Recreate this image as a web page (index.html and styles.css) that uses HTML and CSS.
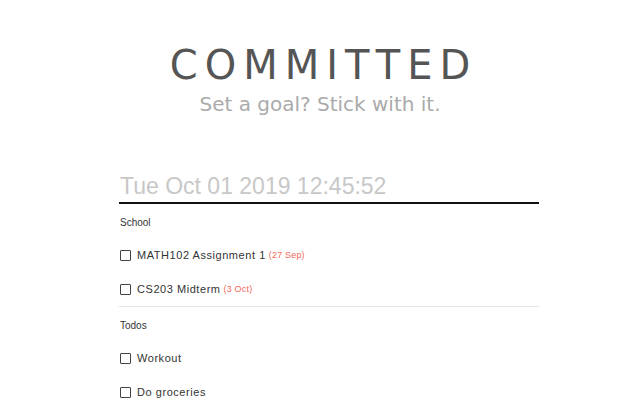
FILE: index.html
```html
<!DOCTYPE html>
<html lang="en">
<head>
  <meta charset="UTF-8">
  <title>Committed</title>
  <link rel="stylesheet" href="styles.css">
</head>
<body>

  <div class="hero">
    <h1 class="title">COMMITTED</h1>
    <p class="tagline">Set a goal? Stick with it.</p>
  </div>

  <div class="content">
    <div class="clock">Tue Oct 01 2019 12:45:52</div>

    <section class="group">
      <h2 class="group-name">School</h2>
      <label class="task">
        <span class="box"></span>
        MATH102 Assignment 1 <span class="due">(27 Sep)</span>
      </label>
      <label class="task">
        <span class="box"></span>
        CS203 Midterm <span class="due">(3 Oct)</span>
      </label>
    </section>

    <section class="group">
      <h2 class="group-name">Todos</h2>
      <label class="task">
        <span class="box"></span>
        Workout
      </label>
      <label class="task">
        <span class="box"></span>
        Do groceries
      </label>
    </section>
  </div>

</body>
</html>
```

FILE: styles.css
```css
body {
  margin: 0;
  background: #fff;
  font-family: "Liberation Sans", Arial, sans-serif;
  color: #333;
}
/* === Header === */
.hero {
  text-align: center;
  padding-top: 42px;
}
.hero .title {
  margin: 0;
  font-family: "DejaVu Sans", sans-serif;
  font-weight: normal;
  font-size: 40px;
  line-height: 46px;
  letter-spacing: 7px;
  margin-right: -7px;
  color: #555;
}
.hero .tagline {
  margin: 4px 0 0;
  font-family: "DejaVu Sans", sans-serif;
  font-size: 20px;
  line-height: 24px;
  color: #aaa;
}
/* === List === */
.content {
  width: 420px;
  margin: 56px auto 0;
  padding-left: 18px;
}
.clock {
  font-size: 23px;
  line-height: 28px;
  padding: 0 0 2px 1px;
  color: #c8c8c8;
  border-bottom: 2px solid #111;
}
.group {
  border-bottom: 1px solid #e4e4e4;
}
.group:last-child {
  border-bottom: none;
}
.group-name {
  margin: 0;
  padding: 4px 0 0 1px;
  font-size: 10px;
  font-weight: normal;
  line-height: 30px;
  color: #333;
}
.task {
  display: flex;
  align-items: center;
  gap: 6px;
  height: 34px;
  padding-left: 1px;
  font-size: 11px;
  letter-spacing: 0.05em;
}
.task .box {
  width: 9px;
  height: 9px;
  border: 1px solid #444;
  border-radius: 1px;
  flex: none;
}
.task .due {
  margin-left: -3px;
  font-size: 9px;
  letter-spacing: 0.02em;
  color: #f06a5a;
}
```
